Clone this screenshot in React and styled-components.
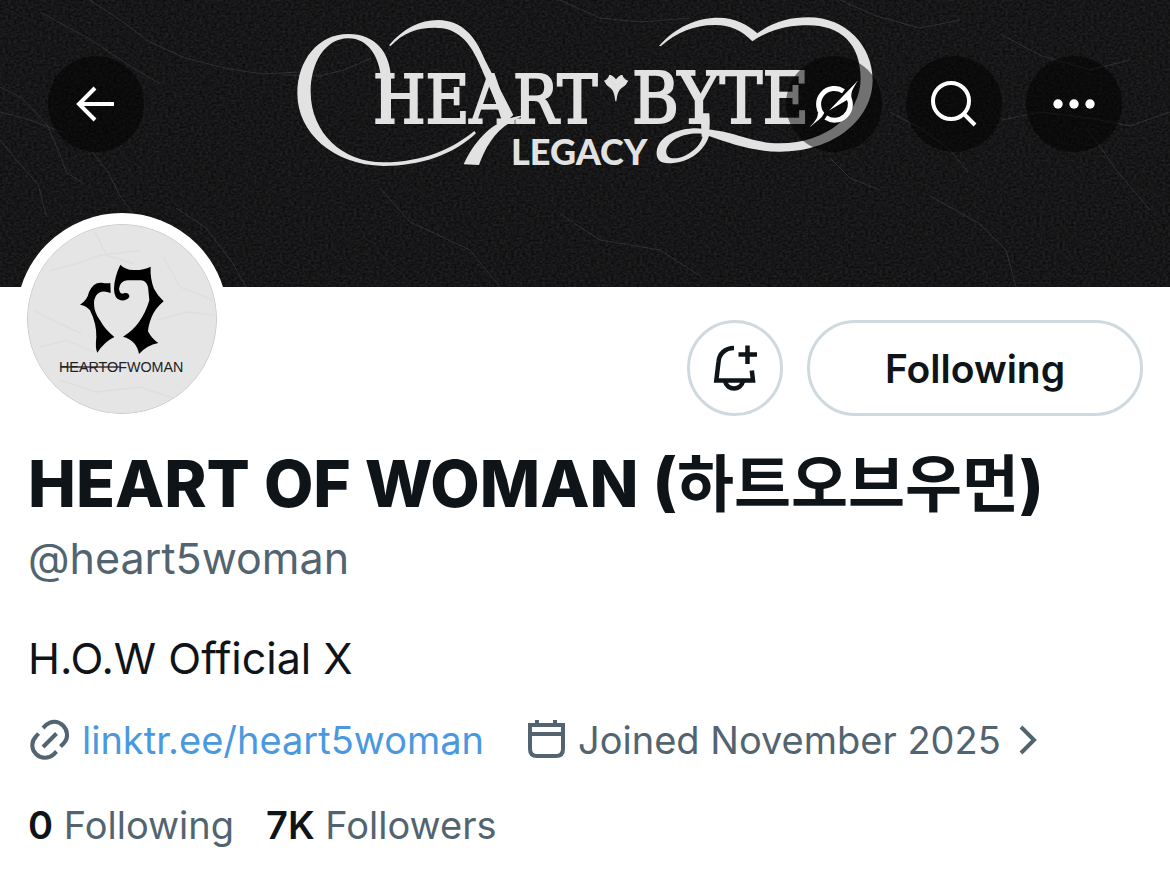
import React from "react";
import styled, { createGlobalStyle } from "styled-components";

const GlobalStyle = createGlobalStyle`
  * {
    box-sizing: border-box;
  }
  body {
    margin: 0;
    background-color: #fff;
    color: #0f1419;
    font-family: Inter, "Noto Sans CJK KR", sans-serif;
  }
`;

const Banner = styled.header`
  position: relative;
  height: 287px;
  padding: 56px 48px;
  background-color: #161617;
`;

const BannerArt = styled.svg`
  position: absolute;
  top: 0;
  left: 0;
  width: 100%;
  height: 100%;
`;

const Toolbar = styled.nav`
  position: relative;
  display: flex;
  gap: 24px;
`;

const RoundButton = styled.button`
  display: flex;
  justify-content: center;
  align-items: center;
  width: 96px;
  height: 96px;
  padding: 0;
  margin-right: ${({ $push }) => ($push ? "auto" : "0")};
  border: none;
  border-radius: 50%;
  background-color: rgba(0, 0, 0, 0.5);
  color: #fff;
  cursor: pointer;
`;

const Profile = styled.main`
  padding: 0 27px 24px 28px;
`;

const TopRow = styled.div`
  display: flex;
  justify-content: space-between;
  align-items: flex-end;
  margin: -74px 0 17px -12px;
`;

const Avatar = styled.a`
  position: relative;
  width: 212px;
  height: 212px;
  border: 11px solid #fff;
  border-radius: 50%;
  background-color: #fff;
  overflow: hidden;
`;

const Actions = styled.div`
  display: flex;
  gap: 24px;
  padding-bottom: 9px;
`;

const OutlineButton = styled.button`
  display: flex;
  justify-content: center;
  align-items: center;
  width: ${({ $wide }) => ($wide ? "336px" : "96px")};
  height: 96px;
  padding: 0;
  border: 3px solid #cfd9de;
  border-radius: 48px;
  background-color: #fff;
  color: #0f1419;
  font-family: inherit;
  font-size: 39px;
  font-weight: 600;
  cursor: pointer;
`;

const Name = styled.h1`
  margin: 0;
  font-size: 64px;
  font-weight: 800;
  line-height: 76px;
`;

const Korean = styled.span`
  font-family: "Noto Sans CJK KR", sans-serif;
  font-size: 62px;
  font-weight: 700;
`;

const Handle = styled.p`
  margin: 8px 0 0;
  color: #536471;
  font-size: 43px;
  line-height: 56px;
`;

const Bio = styled.p`
  margin: 44px 0 0;
  font-size: 43px;
  line-height: 56px;
`;

const Row = styled.div`
  display: flex;
  align-items: center;
  gap: ${({ $gap }) => $gap};
  margin-top: ${({ $top }) => $top};
  color: #536471;
  font-size: 38px;
  line-height: 48px;
`;

const Meta = styled.span`
  display: flex;
  align-items: center;
  gap: 12px;
`;

const Link = styled.a`
  color: #4a99e0;
  text-decoration: none;
`;

const Joined = styled.button`
  display: flex;
  align-items: center;
  gap: 12px;
  padding: 0;
  border: none;
  background: none;
  color: inherit;
  font: inherit;
  cursor: pointer;
`;

const Stat = styled.a`
  color: #536471;
  text-decoration: none;

  b {
    color: #0f1419;
    font-weight: 600;
  }
`;

const creases = [
  "M90 0 L120 20 L150 42 L185 58 L225 68 L262 74 L300 72",
  "M0 87 L22 98 L48 126 L62 160 L66 172 L84 184",
  "M0 140 L18 162 L38 184 L46 215",
  "M92 152 L108 172 L120 196 L132 212",
  "M40 12 L88 38 L130 66 L160 84",
  "M176 208 L206 228 L232 262 L246 287",
  "M0 112 L30 120 L62 132",
  "M284 75 L320 76 L344 70 L372 58",
  "M560 0 L600 18 L640 22 L690 18",
  "M840 0 L876 16 L920 28 L960 20",
  "M830 158 L850 178 L880 190",
  "M890 112 L920 128 L950 150 L968 172",
  "M1002 120 L1040 112 L1090 118 L1130 126 L1170 112",
  "M1086 128 L1104 152 L1116 170 L1150 210",
  "M1000 34 L1042 56 L1090 70 L1130 60",
  "M930 196 L980 224 L1006 250 L1016 287",
  "M560 214 L600 240 L660 250 L700 276",
  "M380 188 L410 222 L470 250 L500 287",
];

const BannerPicture = () => (
  <BannerArt viewBox="0 0 1170 287" preserveAspectRatio="xMidYMid slice" aria-label="Heart Byte Legacy">
    <defs>
      <filter id="leather" x="0" y="0" width="100%" height="100%" colorInterpolationFilters="sRGB">
        <feTurbulence type="fractalNoise" baseFrequency="0.35 0.45" numOctaves="2" seed="4" />
        <feColorMatrix values="0.14 0 0 0 0.018  0.14 0 0 0 0.018  0.14 0 0 0 0.024  0 0 0 0 1" />
      </filter>
    </defs>
    <rect width="1170" height="287" filter="url(#leather)" />
    <g fill="none" stroke="#54565a" strokeWidth="1" opacity="0.4">
      {creases.map((d) => (
        <path key={d} d={d} />
      ))}
    </g>
    <g fill="#e2e2e2">
      <g transform="translate(280 0) scale(0.3333)">
        <path d="M305 366 L305 260 C303 170 265 115 205 115 C135 115 92 190 92 275 C92 400 190 487 310 487 C430 487 520 445 583 393 L588 400 C520 465 420 498 310 498 C160 495 52 400 52 280 C52 180 115 102 205 102 C285 102 330 155 333 235 L333 366 Z" />
        <path d="M327 136 C370 85 420 60 475 60 C545 62 585 105 615 180 L700 345 L680 364 L664 345 L604 205 C570 120 530 83 465 83 C410 83 370 98 332 138 Z" />
        <path d="M745 345 C650 350 590 410 551 493 L597 495 C620 430 660 365 745 345 Z" />
      </g>
      <g transform="translate(590 0) scale(0.3333)">
        <path d="M207 138 C255 82 320 53 385 53 C435 53 475 75 502 100 C550 65 600 52 655 52 C770 52 848 140 848 240 C848 360 730 455 570 455 C490 455 420 430 357 408 C340 460 290 490 235 490 C208 490 198 475 200 455 C205 410 260 385 320 385 C440 392 480 430 570 430 C710 430 812 345 812 235 C812 130 750 76 655 76 C600 76 545 85 487 124 C455 90 420 75 375 75 C310 75 260 98 213 138 Z M340 402 C290 395 240 415 229 450 C225 475 250 482 285 467 C315 452 334 432 340 402 Z" fillRule="evenodd" />
        <path d="M332 340 L358 340 C360 370 360 390 354 410 L335 410 Z" />
        <path d="M42 242 Q54 238 58 224 Q70 226 78 238 Q86 226 97 224 Q101 238 115 242 Q109 256 95 264 Q82 272 79 304 L76 304 Q73 272 61 264 Q48 256 42 242 Z" />
      </g>
      <g stroke="#e2e2e2" strokeWidth="2" fontFamily="DejaVu Serif Condensed, Liberation Serif, serif">
        <text x="373" y="123" fontSize="67">HEART</text>
        <text x="632" y="123" fontSize="71">BYTE</text>
      </g>
      <text x="511" y="165" fontFamily="Lato, sans-serif" fontSize="36" fontWeight="900">LEGACY</text>
    </g>
  </BannerArt>
);

const AvatarPicture = () => (
  <svg width="190" height="190" viewBox="81 71 570 570" role="img" aria-label="Heart of Woman">
    <circle cx="366" cy="356" r="284" fill="#e5e5e6" stroke="#c9c9ca" strokeWidth="3" />
    <g fill="none" stroke="#dededf" strokeWidth="4">
      <path d="M150 210 L230 190 L300 165 L420 150" />
      <path d="M285 95 L320 165 L400 190" />
      <path d="M100 330 L180 370 L245 400" />
      <path d="M490 170 L540 260 L640 300" />
      <path d="M470 360 L560 335 L645 345" />
      <path d="M180 540 L290 575 L420 560 L540 600" />
      <path d="M120 440 L200 420 L280 455" />
    </g>
    <path d="M240 313 Q262 300 267 275 Q280 245 305 247 Q320 250 331 248 L332 278 Q312 270 300 276 Q282 284 282 310 Q282 335 300 360 Q315 388 343 410 Q312 425 292 457 Q285 445 289 410 Q290 370 270 330 Q260 317 240 313 Z" />
    <path d="M361 193 Q375 208 400 209 Q430 210 452 199 Q450 235 462 265 Q472 285 491 303 Q465 325 455 350 Q445 375 444 393 Q455 415 475 428 Q440 435 417 461 Q410 420 369 409 Q400 390 417 365 Q438 335 448 300 L444 260 Q438 238 420 240 L382 240 Q360 242 357 265 Q360 285 374 278 Q388 276 388 290 Q380 302 362 300 Q342 295 342 265 Q343 230 361 193 Z" />
    <g fill="#222">
      <text x="177" y="516" fontFamily="Liberation Sans, sans-serif" fontSize="43">HEARTOFWOMAN</text>
      <rect x="182" y="498" width="180" height="4" />
    </g>
  </svg>
);

const BackIcon = () => (
  <svg width="40" height="40" viewBox="0 0 40 40" fill="none" stroke="currentColor" strokeWidth="4">
    <path d="M38 20 H4 M19 4 L3 20 L19 36" />
  </svg>
);

const GrokIcon = () => (
  <svg width="48" height="48" viewBox="0 0 48 48" fill="currentColor">
    <g fill="none" stroke="currentColor" strokeWidth="5">
      <path d="M33.500 11.300 A15.800 15.800 0 0 0 12.400 34.500" />
      <path d="M38.800 17.500 A15.800 15.800 0 0 1 15.800 37.500" />
    </g>
    <path d="M-0.500 47.500 C3 43 7.500 40 8 33 L14 33 C12 39 5 42 -0.500 47.500 Z" />
    <path d="M48 0.500 C44.500 6 41 10.500 41.300 17 L37 20 L19 30.500 Z" />
  </svg>
);

const SearchIcon = () => (
  <svg width="48" height="48" viewBox="0 0 48 48" fill="none" stroke="currentColor" strokeWidth="4">
    <circle cx="21" cy="21" r="18" />
    <path d="M34 34 L45 45" />
  </svg>
);

const MoreIcon = () => (
  <svg width="44" height="12" viewBox="0 0 44 12" fill="currentColor">
    <circle cx="6" cy="6" r="4.700" />
    <circle cx="22" cy="6" r="4.700" />
    <circle cx="38" cy="6" r="4.700" />
  </svg>
);

const BellIcon = () => (
  <svg width="44" height="46" viewBox="0 0 44 46" fill="none" stroke="currentColor" strokeWidth="4.500">
    <path d="M21 3 C12 3 6 9 5.500 17 L3.300 35.500 H40 L38.800 25.500" />
    <path d="M12 36 C14 46 28 46 30 36" />
    <path d="M34.500 0.500 V19 M25.500 9.500 H44" />
  </svg>
);

const LinkIcon = () => (
  <svg width="42" height="42" viewBox="0 0 42 42" fill="none" stroke="currentColor" strokeWidth="4">
    <path d="M15 9 L18 6 C23 1.500 30 1.500 35 6.500 C40 11.500 40.500 19 36 24 L32.500 27.500" />
    <path d="M10.500 14.500 L8 17.500 C3 22.500 3 30 8 35 C13 40 20.500 40 25.500 35.500 L28.500 32.500" />
    <path d="M15 28 L28.500 14.500" />
  </svg>
);

const CalendarIcon = () => (
  <svg width="40" height="42" viewBox="0 0 40 42" fill="none" stroke="currentColor" strokeWidth="4">
    <path d="M4 6 H37 V30 Q37 37 30 37 H11 Q4 37 4 30 Z" />
    <path d="M4 15 H37 M11 1 V7 M29 1 V7" />
  </svg>
);

const ChevronIcon = () => (
  <svg width="30" height="32" viewBox="0 0 30 32" fill="none" stroke="currentColor" strokeWidth="4">
    <path d="M8 3 L21 16 L8 29" />
  </svg>
);

const App = () => (
  <>
    <GlobalStyle />
    <Banner>
      <BannerPicture />
      <Toolbar>
        <RoundButton $push aria-label="Back">
          <BackIcon />
        </RoundButton>
        <RoundButton aria-label="Grok">
          <GrokIcon />
        </RoundButton>
        <RoundButton aria-label="Search">
          <SearchIcon />
        </RoundButton>
        <RoundButton aria-label="More">
          <MoreIcon />
        </RoundButton>
      </Toolbar>
    </Banner>
    <Profile>
      <TopRow>
        <Avatar href="#photo">
          <AvatarPicture />
        </Avatar>
        <Actions>
          <OutlineButton aria-label="Notifications">
            <BellIcon />
          </OutlineButton>
          <OutlineButton $wide>Following</OutlineButton>
        </Actions>
      </TopRow>
      <Name>
        HEART OF WOMAN (<Korean>하트오브우먼</Korean>)
      </Name>
      <Handle>@heart5woman</Handle>
      <Bio>H.O.W Official X</Bio>
      <Row $gap="42px" $top="30px">
        <Meta>
          <LinkIcon />
          <Link href="#linktree">linktr.ee/heart5woman</Link>
        </Meta>
        <Joined>
          <CalendarIcon />
          Joined November 2025
          <ChevronIcon />
        </Joined>
      </Row>
      <Row $gap="32px" $top="37px">
        <Stat href="#following">
          <b>0</b> Following
        </Stat>
        <Stat href="#followers">
          <b>7K</b> Followers
        </Stat>
      </Row>
    </Profile>
  </>
);

export default App;
